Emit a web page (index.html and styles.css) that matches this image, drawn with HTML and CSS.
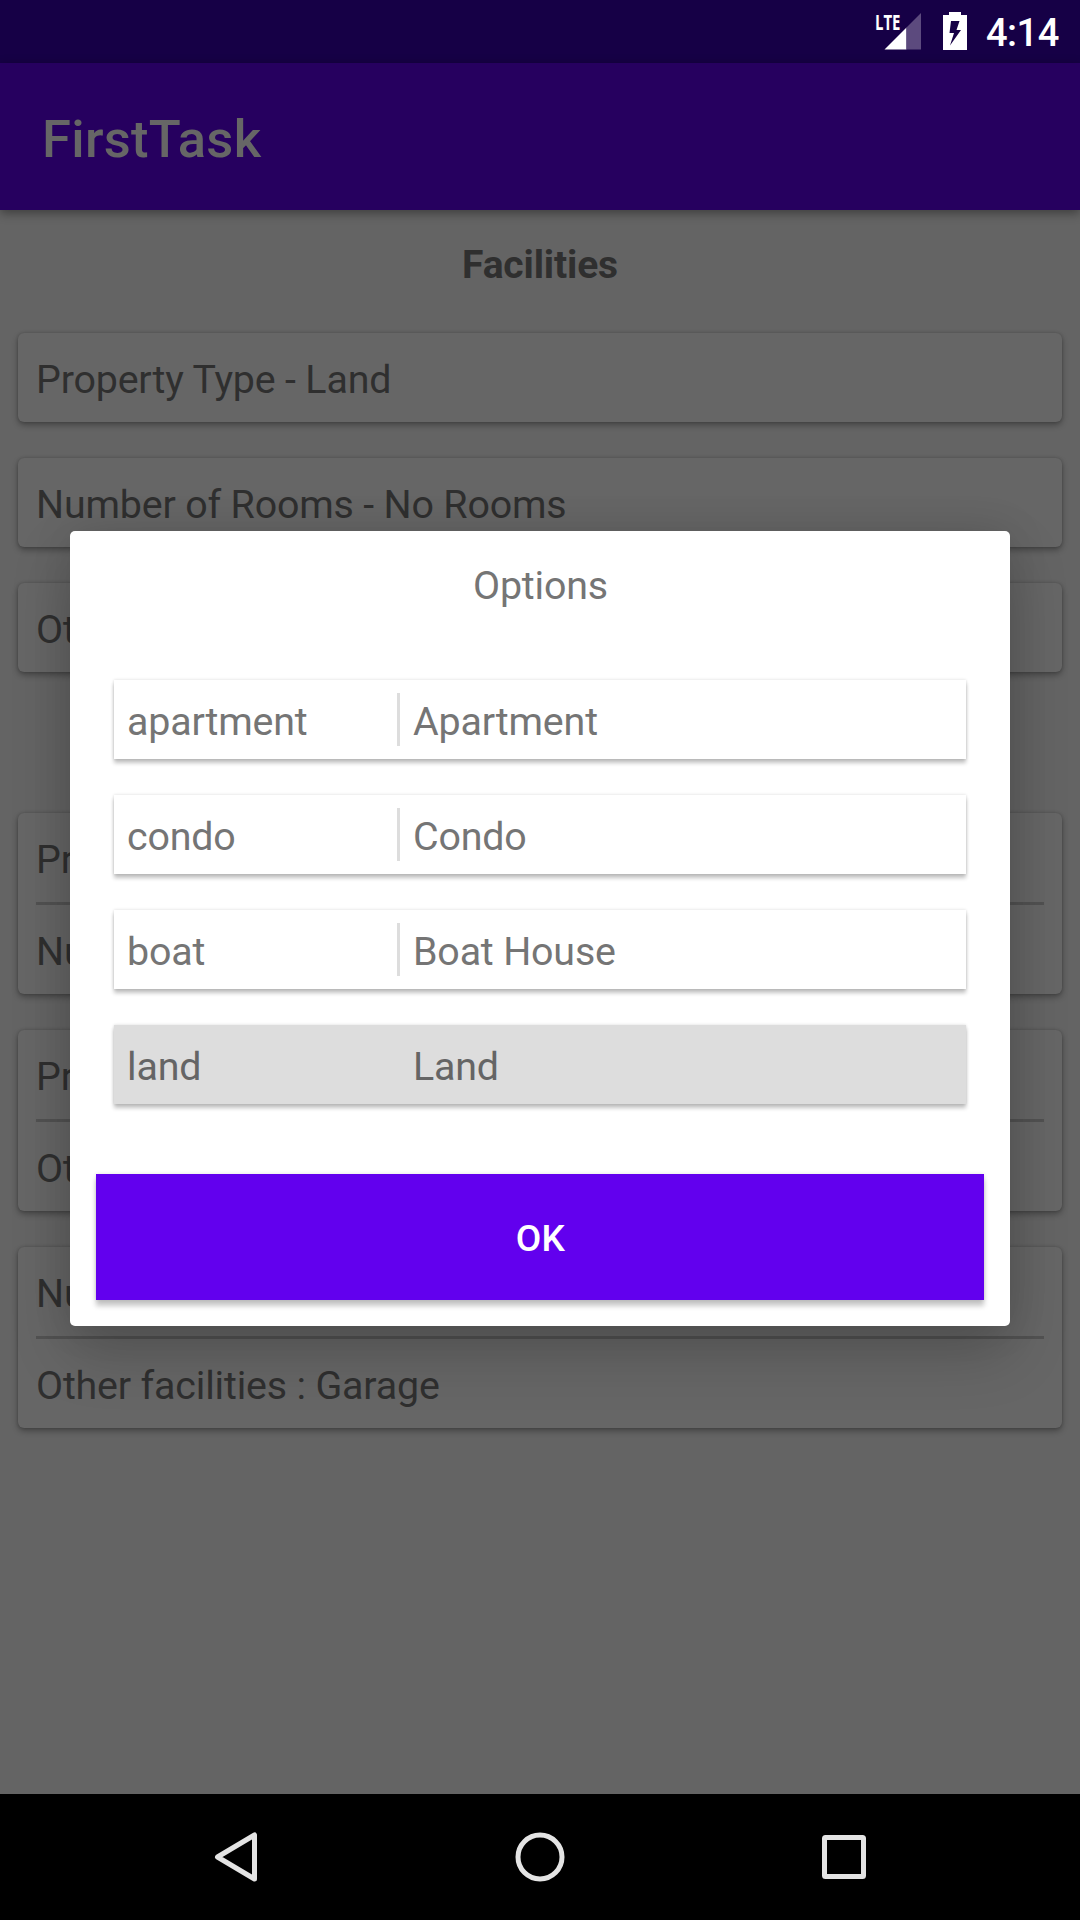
FILE: index.html
```html
<!DOCTYPE html>
<html lang="en">
<head>
<meta charset="utf-8">
<title>FirstTask</title>
<link rel="stylesheet" href="styles.css">
</head>
<body>
<div class="screen">
  <header class="status-bar">
    <svg class="signal" width="48" height="40" viewBox="0 0 48 40" aria-hidden="true">
      <path d="M9.500 36.500 31.500 14.500V36.500Z" fill="#fff"/>
      <path d="M31.500 14.500 46 0V36.500H31.500Z" fill="#5c4a7e"/>
    </svg>
    <span class="network">LTE</span>
    <svg class="battery" width="24" height="38" viewBox="0 0 24 38" aria-hidden="true">
      <path fill="#fff" fill-rule="evenodd" d="M0 3H6V0H18V3H24V38H0ZM8 9L6.500 21H11L7 33.500 18 18H13.500L16.500 9Z"/>
    </svg>
    <span class="clock">4:14</span>
  </header>

  <div class="app-bar"><h1 class="app-title">FirstTask</h1></div>

  <main class="content">
    <h2 class="heading">Facilities</h2>
    <div class="selection-list">
      <div class="card"><p class="line">Property Type - Land</p></div>
      <div class="card"><p class="line">Number of Rooms - No Rooms</p></div>
      <div class="card"><p class="line">Other facilities</p></div>
    </div>
    <div class="exclusion-list">
      <div class="card pair"><p class="line">Property Type</p><p class="line">Number of Rooms</p></div>
      <div class="card pair"><p class="line">Property Type</p><p class="line">Other facilities</p></div>
      <div class="card pair"><p class="line">Number of Rooms</p><p class="line">Other facilities : Garage</p></div>
    </div>
  </main>

  <nav class="nav-bar">
    <svg width="56" height="56" viewBox="0 0 56 56" aria-hidden="true"><path d="M47.500 6V50L10.500 28Z"/></svg>
    <svg width="56" height="56" viewBox="0 0 56 56" aria-hidden="true"><circle cx="28" cy="28" r="22"/></svg>
    <svg width="56" height="56" viewBox="0 0 56 56" aria-hidden="true"><rect x="8.500" y="8.500" width="39" height="39" rx="1"/></svg>
  </nav>

  <section class="dialog" role="dialog" aria-label="Options">
    <h2 class="dialog-title">Options</h2>
    <div class="options">
      <div class="option"><span class="key">apartment</span><span class="name">Apartment</span></div>
      <div class="option"><span class="key">condo</span><span class="name">Condo</span></div>
      <div class="option"><span class="key">boat</span><span class="name">Boat House</span></div>
      <div class="option selected"><span class="key">land</span><span class="name">Land</span></div>
    </div>
    <button class="ok" type="button">OK</button>
  </section>
</div>
</body>
</html>
```
FILE: styles.css
```css
* { box-sizing: border-box; }
body { margin: 0; }
h1, h2, p { margin: 0; font-weight: 400; }

.screen {
  position: relative;
  display: flex;
  flex-direction: column;
  width: 1080px;
  height: 1920px;
  overflow: hidden;
  background: #646464;
  font-family: Roboto, "Liberation Sans", sans-serif;
  font-size: 39.375px;
  line-height: 46px;
  letter-spacing: -0.17px;
  color: #2f2f2f;
}

.status-bar {
  position: relative;
  display: flex;
  align-items: flex-start;
  justify-content: flex-end;
  height: 63px;
  padding: 13px 20px 0 0;
  background: #160046;
  color: #fff;
}
.network {
  position: absolute;
  left: 875px;
  top: 10px;
  font-family: "Open Sans", sans-serif;
  font-size: 22px;
  line-height: 22px;
  font-weight: 700;
  letter-spacing: 0;
  transform: scaleX(0.68);
  transform-origin: 0 0;
}
.signal { margin-right: 20px; }
.battery { margin: -1px 19px 0 0; }
.clock {
  width: 74px;
  font-size: 38px;
  line-height: 41px;
  font-weight: 500;
  letter-spacing: -0.5px;
  white-space: nowrap;
}

.app-bar {
  position: relative;
  display: flex;
  align-items: center;
  height: 147px;
  padding: 4px 42px 0;
  background: #26005f;
  box-shadow: 0 3px 10px rgba(0, 0, 0, 0.4);
}
.app-title { font-size: 52.5px; line-height: 62px; font-weight: 500; letter-spacing: 0.3px; color: #666; }

.content { flex: 1; padding: 32px 18px 0; }
.heading { text-align: center; font-weight: 700; font-size: 39px; letter-spacing: -0.17px; }

.selection-list, .exclusion-list { display: flex; flex-direction: column; gap: 36px; }
.selection-list { margin-top: 45px; }
.exclusion-list { margin-top: 141px; }

.card {
  padding: 0 18px;
  border-radius: 6px;
  background: #666;
  box-shadow: 0 3px 6px rgba(0, 0, 0, 0.32), 0 0 3px rgba(0, 0, 0, 0.18);
}
.card .line { height: 89px; padding: 24px 0 19px; }
.pair .line + .line { height: 92px; border-top: 3px solid #525252; }

.nav-bar {
  display: flex;
  align-items: center;
  justify-content: space-between;
  height: 126px;
  padding: 0 208px 0 207px;
  background: #000;
}
.nav-bar svg { fill: none; stroke: #e4e4e4; stroke-width: 5; stroke-linejoin: round; }

.dialog {
  position: absolute;
  left: 70px;
  top: 531px;
  width: 940px;
  height: 795px;
  padding: 32px 26px 26px;
  border-radius: 5px;
  background: #fff;
  color: #757575;
  box-shadow: 0 26px 60px rgba(0, 0, 0, 0.2), 0 0 40px rgba(0, 0, 0, 0.1);
}
.dialog-title { padding-left: 1px; text-align: center; font-size: 39.375px; }
.options { display: flex; flex-direction: column; gap: 36px; margin: 71px 18px 70px; }
.option {
  display: flex;
  align-items: center;
  height: 79px;
  padding: 4px 13px 0;
  background: #fff;
  box-shadow: 0 4px 4px rgba(0, 0, 0, 0.24), 0 0 3px rgba(0, 0, 0, 0.15);
}
.key { width: 270px; }
.name {
  display: flex;
  align-items: center;
  height: 53px;
  margin-top: -4px;
  padding: 4px 0 0 13px;
  border-left: 3px solid #ddd;
}
.selected { background: #ddd; color: #656565; }
.ok {
  display: block;
  width: 100%;
  height: 126px;
  padding: 3px 0 0 1px;
  border: 0;
  background: #6200ee;
  color: #fff;
  font: 500 37px/44px Roboto, "Liberation Sans", sans-serif;
  letter-spacing: 0.3px;
  box-shadow: 0 6px 5px rgba(0, 0, 0, 0.22), 0 0 4px rgba(0, 0, 0, 0.12);
}
```
